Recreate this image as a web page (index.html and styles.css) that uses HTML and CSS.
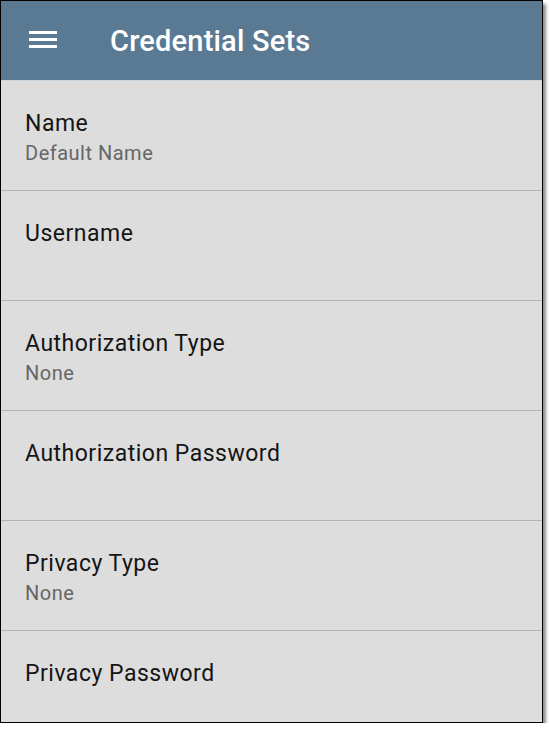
FILE: index.html
```html
<!DOCTYPE html>
<html>
<head>
<meta charset="utf-8">
<link rel="stylesheet" href="styles.css">
</head>
<body>
<div class="frame">
  <header class="appbar">
    <svg class="menu" width="28" height="18" viewBox="0 0 28 18"><rect x="0" y="0" width="28" height="3" fill="#fff"/><rect x="0" y="7" width="28" height="3" fill="#fff"/><rect x="0" y="14" width="28" height="3" fill="#fff"/></svg>
    <h1 class="title">Credential Sets</h1>
  </header>
  <div class="list">
    <div class="row"><div class="label">Name</div><div class="sub">Default Name</div></div>
    <div class="row"><div class="label">Username</div></div>
    <div class="row"><div class="label">Authorization Type</div><div class="sub">None</div></div>
    <div class="row"><div class="label">Authorization Password</div></div>
    <div class="row"><div class="label">Privacy Type</div><div class="sub">None</div></div>
    <div class="row"><div class="label">Privacy Password</div></div>
  </div>
</div>
</body>
</html>
```
FILE: styles.css
```css
html, body { margin: 0; padding: 0; background: #fff; }
body { font-family: Roboto, "Noto Sans", sans-serif; }
.frame {
  width: 541px;
  height: 721px;
  border: 1px solid #000;
  background: #dddddd;
  overflow: hidden;
  box-shadow: 3px 4px 3px rgba(0,0,0,0.45);
  display: flex;
  flex-direction: column;
}
.appbar {
  height: 79px;
  background: #5a7a94;
  border-bottom: 1px solid #c9d4dd;
  display: flex;
  align-items: center;
  flex-shrink: 0;
}
.menu { margin-left: 28px; margin-top: -1px; }
.title {
  margin: 0 0 0 53px;
  color: #fff;
  font-size: 29px;
  font-weight: 500;
  letter-spacing: 0.2px;
}
.list { display: flex; flex-direction: column; }
.row {
  flex-shrink: 0;
  padding: 30px 24px 0;
  box-sizing: border-box;
  height: 110px;
  border-bottom: 1px solid #b3b3b3;
}
.label { font-size: 23px; line-height: 26px; color: #151515; letter-spacing: 0.5px; }
.sub { font-size: 20px; line-height: 24px; color: #666; margin-top: 4px; letter-spacing: 0.5px; }
```
